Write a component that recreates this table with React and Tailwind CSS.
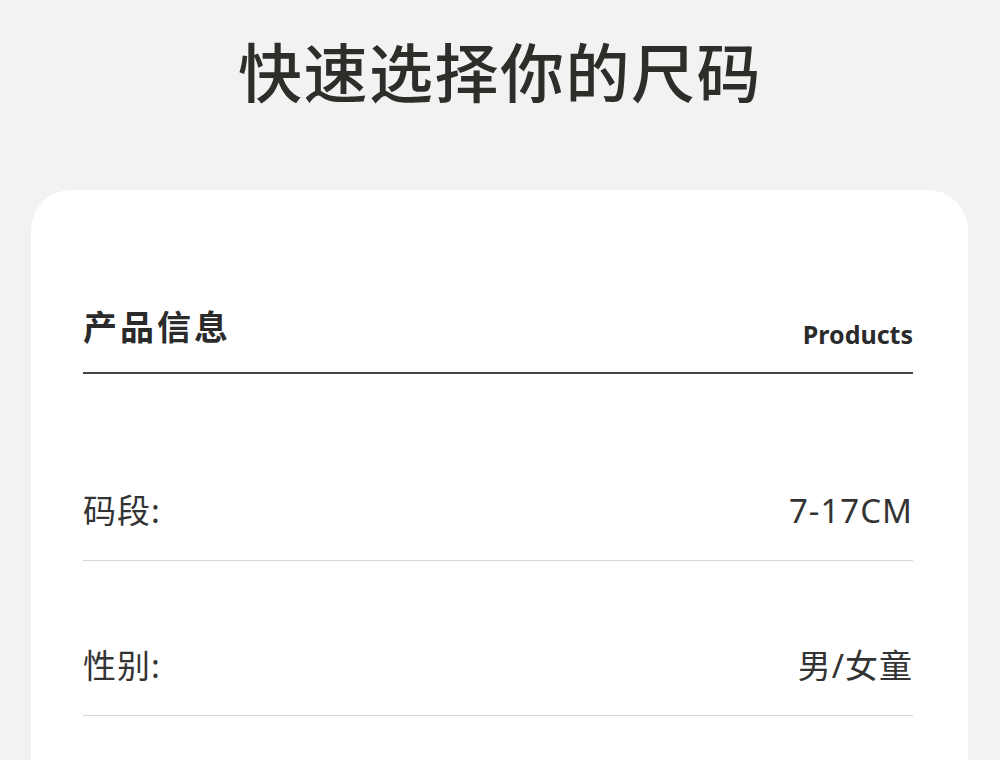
import React from 'react'

const rows = [
  { label: '码段:', value: '7-17CM' },
  { label: '性别:', value: '男/女童' },
]

const App = () => {
  return (
    <div className="w-[1000px] h-[760px] overflow-hidden bg-[#f2f2f2] font-['Noto_Sans','Noto_Sans_CJK_SC',sans-serif]">
      <div className="pt-[41px] text-center text-[64px] leading-[64px] tracking-[1.5px] font-medium text-[#2e2d2a]">
        快速选择你的尺码
      </div>
      <div className="mt-[85px] ml-[31px] w-[937px] h-[600px] bg-white rounded-t-[40px] pt-[120px] pl-[52px] pr-[55px]">
        <div className="flex justify-between items-end border-b-2 border-[#454545] pb-[28px]">
          <div className="text-[34px] leading-[34px] tracking-[3px] font-bold text-[#2b2b2b]">产品信息</div>
          <div className="text-[25px] leading-[25px] font-bold text-[#2b2b2b] mb-[-3px]">Products</div>
        </div>
        <div className="mt-[32px]">
          {rows.map((r) => (
            <div key={r.label} className="flex justify-between items-center pt-[88px] pb-[33px] border-b border-[#d6d6d6]">
              <div className="text-[33px] leading-[33px] tracking-[1px] text-[#333333]">{r.label}</div>
              <div className="text-[33px] leading-[33px] tracking-[1px] text-[#333333]">{r.value}</div>
            </div>
          ))}
        </div>
      </div>
    </div>
  )
}

export default App
